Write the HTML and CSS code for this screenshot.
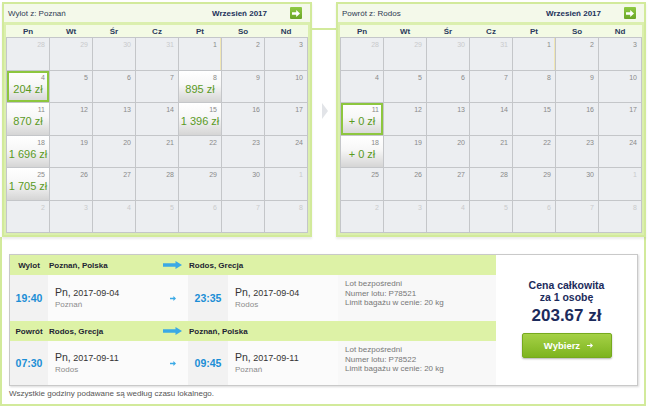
FILE: index.html
```html
<!DOCTYPE html>
<html lang="pl">
<head>
<meta charset="utf-8">
<title>Wybór lotu</title>
<link rel="stylesheet" href="styles.css">
</head>
<body>
<div class="cals">
  <div class="panel">
    <div class="panel-head">
      <span class="route">Wylot z: Poznań</span>
      <span class="month">Wrzesień 2017</span>
      <span class="next"><svg width="8" height="7" viewBox="0 0 8 7"><path d="M0 2.3h4.2V0L8 3.5 4.2 7V4.7H0z" fill="#fff"/></svg></span>
    </div>
    <div class="weekdays"><span>Pn</span><span>Wt</span><span>Śr</span><span>Cz</span><span>Pt</span><span>So</span><span>Nd</span></div>
    <div class="days">
      <div class="day out"><i>28</i></div><div class="day out"><i>29</i></div><div class="day out"><i>30</i></div><div class="day out"><i>31</i></div><div class="day today"><i>1</i></div><div class="day"><i>2</i></div><div class="day"><i>3</i></div>
      <div class="day fare picked"><i>4</i><b>204 zł</b></div><div class="day"><i>5</i></div><div class="day"><i>6</i></div><div class="day"><i>7</i></div><div class="day fare"><i>8</i><b>895 zł</b></div><div class="day"><i>9</i></div><div class="day"><i>10</i></div>
      <div class="day fare"><i>11</i><b>870 zł</b></div><div class="day"><i>12</i></div><div class="day"><i>13</i></div><div class="day"><i>14</i></div><div class="day fare"><i>15</i><b>1 396 zł</b></div><div class="day"><i>16</i></div><div class="day"><i>17</i></div>
      <div class="day fare"><i>18</i><b>1 696 zł</b></div><div class="day"><i>19</i></div><div class="day"><i>20</i></div><div class="day"><i>21</i></div><div class="day"><i>22</i></div><div class="day"><i>23</i></div><div class="day"><i>24</i></div>
      <div class="day fare"><i>25</i><b>1 705 zł</b></div><div class="day"><i>26</i></div><div class="day"><i>27</i></div><div class="day"><i>28</i></div><div class="day"><i>29</i></div><div class="day"><i>30</i></div><div class="day out"><i>1</i></div>
      <div class="day out"><i>2</i></div><div class="day out"><i>3</i></div><div class="day out"><i>4</i></div><div class="day out"><i>5</i></div><div class="day out"><i>6</i></div><div class="day out"><i>7</i></div><div class="day out"><i>8</i></div>
    </div>
  </div>

  <div class="link"><span class="link-line"></span><span class="link-tip"></span></div>

  <div class="panel">
    <div class="panel-head">
      <span class="route">Powrót z: Rodos</span>
      <span class="month">Wrzesień 2017</span>
      <span class="next"><svg width="8" height="7" viewBox="0 0 8 7"><path d="M0 2.3h4.2V0L8 3.5 4.2 7V4.7H0z" fill="#fff"/></svg></span>
    </div>
    <div class="weekdays"><span>Pn</span><span>Wt</span><span>Śr</span><span>Cz</span><span>Pt</span><span>So</span><span>Nd</span></div>
    <div class="days">
      <div class="day out"><i>28</i></div><div class="day out"><i>29</i></div><div class="day out"><i>30</i></div><div class="day out"><i>31</i></div><div class="day today"><i>1</i></div><div class="day"><i>2</i></div><div class="day"><i>3</i></div>
      <div class="day"><i>4</i></div><div class="day"><i>5</i></div><div class="day"><i>6</i></div><div class="day"><i>7</i></div><div class="day"><i>8</i></div><div class="day"><i>9</i></div><div class="day"><i>10</i></div>
      <div class="day fare picked"><i>11</i><b>+ 0 zł</b></div><div class="day"><i>12</i></div><div class="day"><i>13</i></div><div class="day"><i>14</i></div><div class="day"><i>15</i></div><div class="day"><i>16</i></div><div class="day"><i>17</i></div>
      <div class="day fare"><i>18</i><b>+ 0 zł</b></div><div class="day"><i>19</i></div><div class="day"><i>20</i></div><div class="day"><i>21</i></div><div class="day"><i>22</i></div><div class="day"><i>23</i></div><div class="day"><i>24</i></div>
      <div class="day"><i>25</i></div><div class="day"><i>26</i></div><div class="day"><i>27</i></div><div class="day"><i>28</i></div><div class="day"><i>29</i></div><div class="day"><i>30</i></div><div class="day out"><i>1</i></div>
      <div class="day out"><i>2</i></div><div class="day out"><i>3</i></div><div class="day out"><i>4</i></div><div class="day out"><i>5</i></div><div class="day out"><i>6</i></div><div class="day out"><i>7</i></div><div class="day out"><i>8</i></div>
    </div>
  </div>
</div>

<section class="summary">
  <div class="trip">
    <div class="legs">
      <div class="leg-head">
        <span class="dir">Wylot</span>
        <span class="city">Poznań, Polska</span>
        <span class="big-arrow"><svg width="19" height="8" viewBox="0 0 19 8"><path d="M0 2.2h12.5V0L19 4l-6.5 4V5.8H0z" fill="#3aa9e5"/></svg></span>
        <span class="city dest">Rodos, Grecja</span>
      </div>
      <div class="leg">
        <div class="time">19:40</div>
        <div class="when"><div class="date"><span class="dow">Pn,</span> 2017-09-04</div><div class="place">Poznań</div></div>
        <div class="hop"><svg width="6" height="5" viewBox="0 0 6 5"><path d="M0 1.8h3.4V0L6 2.5 3.4 5V3.2H0z" fill="#3aa9e5"/></svg></div>
        <div class="time">23:35</div>
        <div class="when"><div class="date"><span class="dow">Pn,</span> 2017-09-04</div><div class="place">Rodos</div></div>
        <div class="info">Lot bezpośredni<br>Numer lotu: P78521<br>Limit bagażu w cenie: 20 kg</div>
      </div>
      <div class="leg-head">
        <span class="dir">Powrót</span>
        <span class="city">Rodos, Grecja</span>
        <span class="big-arrow"><svg width="19" height="8" viewBox="0 0 19 8"><path d="M0 2.2h12.5V0L19 4l-6.5 4V5.8H0z" fill="#3aa9e5"/></svg></span>
        <span class="city dest">Poznań, Polska</span>
      </div>
      <div class="leg short">
        <div class="time">07:30</div>
        <div class="when"><div class="date"><span class="dow">Pn,</span> 2017-09-11</div><div class="place">Rodos</div></div>
        <div class="hop"><svg width="6" height="5" viewBox="0 0 6 5"><path d="M0 1.8h3.4V0L6 2.5 3.4 5V3.2H0z" fill="#3aa9e5"/></svg></div>
        <div class="time">09:45</div>
        <div class="when"><div class="date"><span class="dow">Pn,</span> 2017-09-11</div><div class="place">Poznań</div></div>
        <div class="info">Lot bezpośredni<br>Numer lotu: P78522<br>Limit bagażu w cenie: 20 kg</div>
      </div>
    </div>
    <div class="price">
      <div class="total-label">Cena całkowita<br>za 1 osobę</div>
      <div class="amount">203.67 zł</div>
      <button class="choose" type="button">Wybierz <svg width="6" height="5" viewBox="0 0 6 5"><path d="M0 1.9h3.4V0L6 2.5 3.4 5V3.1H0z" fill="#fff"/></svg></button>
    </div>
  </div>
  <p class="note">Wszystkie godziny podawane są według czasu lokalnego.</p>
</section>
</body>
</html>
```

FILE: styles.css
```css
* {
  box-sizing: border-box;
  margin: 0;
  padding: 0;
}

body {
  width: 650px;
  height: 408px;
  overflow: hidden;
  background: #fff;
  padding-top: 2px;
  font-family: "Liberation Sans", Arial, sans-serif;
  font-size: 8px;
  color: #333;
}

/* ---------- calendars ---------- */
.cals {
  display: flex;
  align-items: flex-start;
  padding-left: 2px;
}

.panel {
  width: 310px;
  border: 2px solid #d2ea9b;
  background: #dbefae;
  padding-bottom: 2px;
  box-shadow: 0 2px 2px rgba(0, 0, 0, 0.08);
}

.panel-head {
  height: 18px;
  display: flex;
  align-items: center;
  background: #f4f9ea;
  padding: 0 8px 0 4px;
  margin-bottom: 3px;
}

.route {
  color: #2f3a52;
  flex: 1;
}

.month {
  font-weight: bold;
  color: #22315a;
  margin-right: 23px;
}

.next {
  width: 12px;
  height: 12px;
  display: flex;
  align-items: center;
  justify-content: center;
  background: linear-gradient(#8fca45, #6aa526);
  border-radius: 1px;
}

.weekdays {
  display: grid;
  grid-template-columns: repeat(7, 42px);
  column-gap: 1px;
  height: 12px;
  margin: 0 2px;
  padding: 0 1px;
  background: #f3fae4;
  align-items: center;
  text-align: center;
  font-weight: bold;
  color: #2b3a5c;
}

.days {
  display: grid;
  grid-template-columns: repeat(7, 42px);
  grid-template-rows: 32px 31px 32px 31px 32px 31px;
  gap: 1px;
  margin: 0 2px;
  border: 1px solid #c4c6c9;
  background: #c4c6c9;
}

.day {
  background: #eceef1;
  display: flex;
  flex-direction: column;
  align-items: stretch;
}

.day i {
  font-style: normal;
  font-size: 7px;
  line-height: 8px;
  color: #8a8a8a;
  text-align: right;
  padding: 3px 4px 0 0;
}

.day.out i {
  color: #c9cacc;
}

.day.today {
  box-shadow: inset -1px 0 0 #f1e7b4;
}

.day.fare {
  background: linear-gradient(#ffffff 0%, #f7f7f7 45%, #d5d5d5 100%);
}

.day.picked {
  box-shadow: inset 0 0 0 2px #8dc63f;
}

.day b {
  font-weight: normal;
  font-size: 11px;
  line-height: 13px;
  color: #5a9a1f;
  text-align: center;
  white-space: nowrap;
  margin-top: 1px;
}

/* connector between the two calendars */
.link {
  width: 24px;
  display: flex;
  flex-direction: column;
  align-items: flex-start;
}

.link-line {
  width: 100%;
  height: 2px;
  margin-top: 26px;
  background: #d2ea9b;
}

.link-tip {
  margin: 73px 0 0 10px;
  width: 0;
  height: 0;
  border-left: 6px solid #e2e4e8;
  border-top: 8px solid transparent;
  border-bottom: 8px solid transparent;
}

/* ---------- summary ---------- */
.summary {
  width: 646px;
  border: 2px solid #d2ea9b;
  border-top: 0;
  padding: 17px 6px 5px 7px;
}

.trip {
  display: flex;
  border: 1px solid #c9c9c9;
  box-shadow: 1px 1px 2px rgba(0, 0, 0, 0.15);
  background: #fff;
}

.legs {
  flex: 1;
}

.leg-head,
.leg {
  display: grid;
  grid-template-columns: 38px 115px 25px 40px 110px 1fr;
}

.leg-head {
  height: 20px;
  align-items: center;
  background: #ddf2a6;
  font-weight: bold;
  color: #1e2533;
}

.dir {
  text-align: center;
}

.city {
  padding-left: 1px;
  white-space: nowrap;
}

.city.dest {
  grid-column: 4 / 7;
}

.big-arrow {
  display: flex;
  align-items: center;
}

.leg {
  height: 46px;
  background: #f8f8f8;
}

.leg.short {
  height: 44px;
}

.time {
  display: flex;
  align-items: center;
  justify-content: center;
  background: #f2f2f2;
  color: #1b8ed6;
  font-weight: bold;
  font-size: 10.5px;
}

.when {
  display: flex;
  flex-direction: column;
  justify-content: center;
  padding-left: 7px;
  background: #fbfbfb;
}

.date {
  font-size: 9px;
  line-height: 11px;
  color: #333;
  white-space: nowrap;
}

.dow {
  font-size: 10.5px;
}

.place {
  font-size: 8px;
  line-height: 9px;
  color: #8c8c8c;
  margin-top: 1px;
}

.hop {
  display: flex;
  align-items: center;
  justify-content: center;
  padding-right: 5px;
  background: #fbfbfb;
}

.info {
  padding: 4px 0 0 7px;
  font-size: 8px;
  line-height: 9.5px;
  color: #777;
}

.price {
  width: 141px;
  display: flex;
  flex-direction: column;
  align-items: center;
  padding-top: 25px;
  background: #fff;
}

.total-label {
  text-align: center;
  font-weight: bold;
  font-size: 10.5px;
  line-height: 11.5px;
  color: #1c2b5c;
}

.amount {
  margin-top: 3px;
  font-weight: bold;
  font-size: 17px;
  line-height: 20px;
  color: #1c2b5c;
}

.choose {
  margin-top: 7px;
  width: 90px;
  height: 25px;
  border: 1px solid #76aa1e;
  border-radius: 2px;
  background: linear-gradient(#a5d146, #7db41f);
  box-shadow: 0 1px 2px rgba(0, 0, 0, 0.3);
  color: #fff;
  font-family: inherit;
  font-weight: bold;
  font-size: 9.5px;
  display: flex;
  align-items: center;
  justify-content: center;
  gap: 7px;
  padding-left: 4px;
}

.note {
  margin-top: 3px;
  font-size: 8px;
  line-height: 10px;
  color: #555;
}
```
